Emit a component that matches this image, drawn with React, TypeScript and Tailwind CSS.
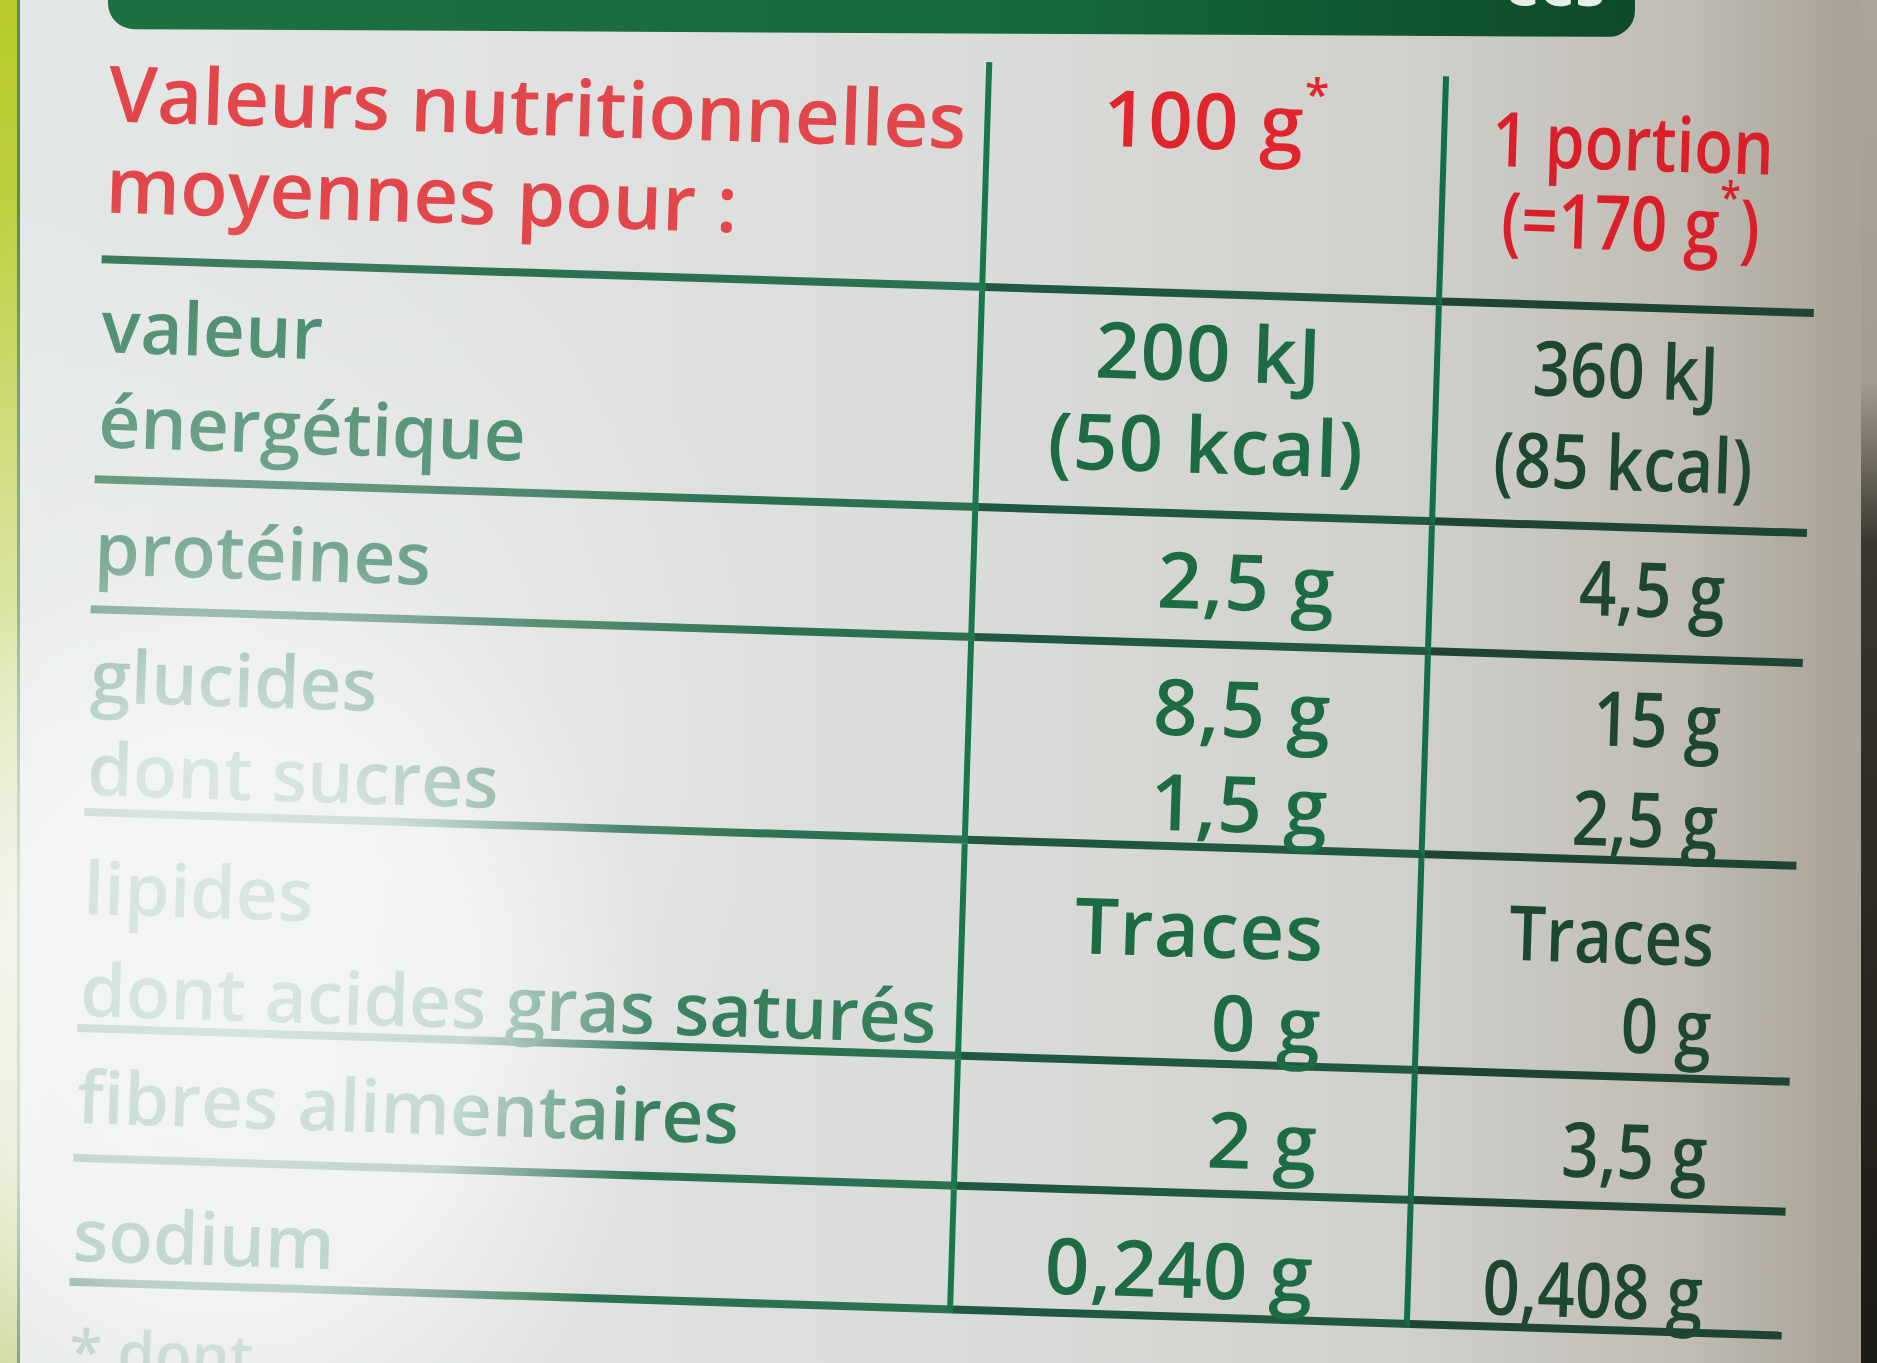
const font = "font-['Open_Sans',sans-serif]";

function Lines({ items }: { items: string[] }) {
  return (
    <>
      {items.map((t, i) => (
        <div key={i} className="whitespace-nowrap">
          {t}
        </div>
      ))}
    </>
  );
}

export default function App() {
  const c1 =
    "border-r-[6px] border-b-[8px] border-r-[#16784b] border-b-[#2b7050] pl-[2px] text-[73px] font-semibold";
  const lbl = "text-[#347e5c]";
  const c2 =
    "border-r-[6px] border-b-[8px] border-r-[#137046] border-b-[#1f583e] text-[78px] font-semibold tracking-[0.01em]";
  const v2 = "text-[#1d6b44]";
  const c3 = "border-b-[8px] border-b-[#1e4534] text-[76px] font-semibold";
  const v3 = "text-[#1e4732]";

  return (
    <div
      className={`relative flex h-[1363px] w-[1877px] overflow-hidden bg-[linear-gradient(90deg,#e3e7e5_0%,#dfe2e0_30%,#d9dbd8_55%,#d0d0cc_75%,#c0bcb4_90%,#aaa397_98%)] ${font}`}
    >
      {/* yellow edge of the pack */}
      <div className="w-[20px] shrink-0 border-r-[3px] border-r-[#4f8f55] bg-[linear-gradient(180deg,#b8cb2a_0%,#c6d45a_35%,#dbe2ad_65%,#c9d38c_100%)]" />

      <div className="flex min-w-0 flex-1 flex-col">
        {/* green title band, cut by the top of the photo */}
        <div className="-mt-[30px] ml-[88px] flex h-[63px] w-[1527px] shrink-0 rotate-[0.3deg] items-end justify-end overflow-hidden rounded-b-[26px] bg-[linear-gradient(90deg,#1f7040_0%,#166a3a_60%,#0e4a28_100%)] pb-[24px] pr-[30px]">
          <span className="text-[60px] font-bold leading-[60px] text-[#e8efe9]">
            ées
          </span>
        </div>

        <div className="ml-[68px] mt-[28px] w-[1713px] shrink-0 rotate-[1.8deg]">
          <div className="grid grid-cols-[884px_457px_372px] grid-rows-[229px_220px_130px_203px_216px_130px_124px]">
            {/* header */}
            <div className={`${c1} pt-[12px] text-[78px] leading-[91px] text-[#e2464a]`}>
              <Lines items={["Valeurs nutritionnelles", "moyennes pour :"]} />
            </div>
            <div className={`${c2} whitespace-nowrap pt-[12px] text-center text-[66px] leading-[76px] tracking-[-0.02em] text-[#e1252d]`}>
              100 g<sup className="align-[20px] text-[44px]">*</sup>
            </div>
            <div className={`${c3} pt-[19px] text-[68px] leading-[80px] text-[#d81f2a]`}>
              <div className="origin-center scale-x-[0.84] whitespace-nowrap text-center">
                <div>1 portion</div>
                <div>
                  (=170 g<sup className="align-[18px] text-[44px]">*</sup>)
                </div>
              </div>
            </div>

            {/* énergie */}
            <div className={`${c1} ${lbl} pt-[13px] leading-[95px]`}>
              <Lines items={["valeur", "énergétique"]} />
            </div>
            <div className={`${c2} ${v2} pt-[7px] text-center leading-[92px]`}>
              <Lines items={["200 kJ", "(50 kcal)"]} />
            </div>
            <div className={`${c3} ${v3} pt-[12px] leading-[92px]`}>
              <div className="origin-center scale-x-[0.86] text-center">
                <Lines items={["360 kJ", "(85 kcal)"]} />
              </div>
            </div>

            {/* protéines */}
            <div className={`${c1} ${lbl} pt-[17px] leading-[92px]`}>protéines</div>
            <div className={`${c2} ${v2} pr-[92px] pt-[15px] text-right leading-[92px]`}>2,5 g</div>
            <div className={`${c3} ${v3} pr-[80px] pt-[10px] leading-[92px]`}>
              <div className="origin-right scale-x-[0.86] text-right">4,5 g</div>
            </div>

            {/* glucides */}
            <div className={`${c1} ${lbl} pt-[14px] leading-[93px]`}>
              <Lines items={["glucides", "dont sucres"]} />
            </div>
            <div className={`${c2} ${v2} pr-[92px] pt-[11px] text-right leading-[95px]`}>
              <Lines items={["8,5 g", "1,5 g"]} />
            </div>
            <div className={`${c3} ${v3} pr-[80px] pt-[6px] leading-[100px]`}>
              <div className="origin-right scale-x-[0.86] text-right">
                <Lines items={["15 g", "2,5 g"]} />
              </div>
            </div>

            {/* lipides */}
            <div className={`${c1} ${lbl} pt-[19px] leading-[102px]`}>
              <Lines items={["lipides", "dont acides gras saturés"]} />
            </div>
            <div className={`${c2} ${v2} pr-[92px] pt-[30px] text-right leading-[93px]`}>
              <Lines items={["Traces", "0 g"]} />
            </div>
            <div className={`${c3} ${v3} pr-[80px] pt-[25px] leading-[89px]`}>
              <div className="origin-right scale-x-[0.86] text-right">
                <Lines items={["Traces", "0 g"]} />
              </div>
            </div>

            {/* fibres */}
            <div className={`${c1} ${lbl} whitespace-nowrap pt-[17px] leading-[92px]`}>fibres alimentaires</div>
            <div className={`${c2} ${v2} pr-[92px] pt-[24px] text-right leading-[92px]`}>2 g</div>
            <div className={`${c3} ${v3} pr-[80px] pt-[23px] leading-[92px]`}>
              <div className="origin-right scale-x-[0.86] text-right">3,5 g</div>
            </div>

            {/* sodium */}
            <div className={`${c1} ${lbl} pt-[25px] leading-[92px]`}>sodium</div>
            <div className={`${c2} ${v2} pr-[92px] pt-[25px] text-right leading-[92px]`}>0,240 g</div>
            <div className={`${c3} ${v3} pr-[80px] pt-[33px] leading-[92px]`}>
              <div className="origin-right scale-x-[0.86] text-right">0,408 g</div>
            </div>
          </div>
          <div className="h-[40px] pl-[2px] pt-[34px] text-[60px] font-semibold leading-[60px] text-[#9fbcae]">
            * dont
          </div>
        </div>
      </div>

      {/* dark edge of the pack on the right */}
      <div className="w-[16px] shrink-0 bg-[linear-gradient(180deg,#aca599_0%,#a39c90_28%,#3a362d_40%,#1c1a15_100%)]" />

      {/* light glare over the lower left of the label */}
      <div className="pointer-events-none absolute inset-0 bg-[radial-gradient(ellipse_430px_500px_at_230px_1030px,rgba(247,249,248,0.78)_0%,rgba(247,249,248,0.7)_55%,rgba(247,249,248,0)_100%),radial-gradient(ellipse_620px_560px_at_180px_740px,rgba(245,247,246,0.5)_0%,rgba(245,247,246,0.3)_50%,rgba(245,247,246,0)_100%)]" />
    </div>
  );
}
